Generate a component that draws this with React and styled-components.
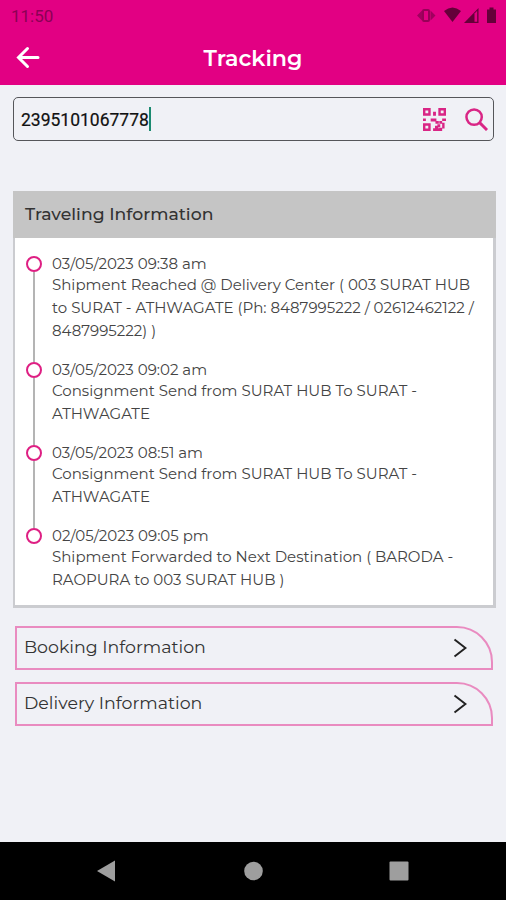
import React from 'react';
import styled, { createGlobalStyle } from 'styled-components';

const GlobalStyle = createGlobalStyle`
    *,
    *::before,
    *::after {
        box-sizing: border-box;
    }

    body {
        margin: 0;
        background-color: #f0f1f6;
        font-family: Montserrat, Inter, sans-serif;
    }
`;

const Screen = styled.div`
    display: flex;
    flex-direction: column;
    width: 506px;
    height: 900px;
    overflow: hidden;
    background-color: #f0f1f6;
`;

const Header = styled.header`
    height: 85px;
    background-color: #e20083;
`;

const StatusBar = styled.div`
    display: flex;
    justify-content: space-between;
    height: 32px;
    padding: 0 7px 0 11px;
    color: #8b0055;
    font-family: Roboto, sans-serif;
    font-size: 17px;
    line-height: 33px;
`;

const StatusIcons = styled.svg`
    width: 84px;
    height: 32px;
`;

const TitleBar = styled.div`
    display: grid;
    grid-template-columns: 60px 1fr 60px;
    align-items: center;
    height: 52px;
    color: #fff;
`;

const BackIcon = styled.svg`
    width: 26px;
    height: 26px;
    margin-left: 15px;
`;

const Title = styled.h1`
    margin: 0;
    font-size: 22.2px;
    font-weight: 600;
    text-align: center;
`;

const Content = styled.main`
    flex: 1;
    padding: 12px 10px 0 13px;
`;

const SearchBox = styled.div`
    display: flex;
    align-items: center;
    width: 481px;
    height: 44px;
    padding: 0 5px 0 7px;
    border: 1px solid #55565a;
    border-radius: 5px;
`;

const SearchValue = styled.span`
    padding-top: 2px;
    color: #111;
    font-family: Roboto, sans-serif;
    font-size: 17.5px;
    -webkit-text-stroke: 0.2px #111;
`;

const Caret = styled.span`
    width: 2px;
    height: 24px;
    background-color: #1b8a70;
`;

const QrIcon = styled.svg`
    width: 23px;
    height: 23px;
    margin-left: auto;
`;

const SearchIcon = styled.svg`
    width: 23px;
    height: 23px;
    margin-left: 19px;
`;

const Card = styled.section`
    height: 417px;
    margin-top: 50px;
    border: solid #cbccd0;
    border-width: 0 3px 3px 2px;
    background-color: #fff;
`;

const CardTitle = styled.h2`
    height: 47px;
    margin: 0 -3px 0 -2px;
    padding-left: 12px;
    background-color: #c5c5c5;
    color: #333;
    font-size: 17.25px;
    font-weight: 500;
    line-height: 45px;
`;

const Timeline = styled.ol`
    margin: 0;
    padding: 17px 0 0 11px;
    list-style: none;
`;

const Event = styled.li`
    display: flex;
    gap: 10px;
`;

const Marker = styled.div`
    display: flex;
    flex-direction: column;
    align-items: center;
    width: 16px;
    padding-top: 1px;

    &::before {
        content: '';
        width: 16px;
        height: 16px;
        border: 2.5px solid #de1f83;
        border-radius: 50%;
    }

    &::after {
        content: '';
        flex: 1;
        width: 2px;
        margin-bottom: -1px;
        background-color: ${(props) => (props.$last ? 'transparent' : '#b4b4b4')};
    }
`;

const EventText = styled.div`
    padding-bottom: 19px;
    color: #444;
    font-size: 15px;
    white-space: nowrap;
`;

const EventDate = styled.div`
    height: 18px;
    line-height: 17px;
`;

const EventLine = styled.div`
    height: 23px;
    line-height: 23px;
`;

const Panels = styled.div`
    display: flex;
    flex-direction: column;
    gap: 12px;
    margin: 18px 0 0 2px;
`;

const Panel = styled.div`
    display: flex;
    align-items: center;
    justify-content: space-between;
    width: 478px;
    height: 44px;
    padding: 0 24px 3px 7px;
    border: 2px solid #e98bc0;
    border-radius: 0 36px 0 0;
    color: #333;
    font-size: 17.4px;
`;

const Chevron = styled.svg`
    width: 14px;
    height: 20px;
    margin-top: 3px;
`;

const NavBar = styled.nav`
    height: 58px;
    background-color: #000;
`;

const events = [
    {
        date: '03/05/2023 09:38 am',
        lines: [
            'Shipment Reached @ Delivery Center ( 003 SURAT HUB',
            'to SURAT - ATHWAGATE (Ph: 8487995222 / 02612462122 /',
            '8487995222) )',
        ],
    },
    {
        date: '03/05/2023 09:02 am',
        lines: ['Consignment Send from SURAT HUB To SURAT -', 'ATHWAGATE'],
    },
    {
        date: '03/05/2023 08:51 am',
        lines: ['Consignment Send from SURAT HUB To SURAT -', 'ATHWAGATE'],
    },
    {
        date: '02/05/2023 09:05 pm',
        lines: ['Shipment Forwarded to Next Destination ( BARODA -', 'RAOPURA to 003 SURAT HUB )'],
    },
];

const panels = ['Booking Information', 'Delivery Information'];

export default function App() {
    return (
        <Screen>
            <GlobalStyle />
            <Header>
                <StatusBar>
                    <span>11:50</span>
                    <StatusIcons viewBox="415 0 84 32">
                        <path d="M417 15.500l5-5v10zM435.500 15.500l-5-5v10z" fill="#a0005f" />
                        <rect x="423" y="10" width="6" height="11" rx="1" fill="#e20083" stroke="#980058" strokeWidth="2" />
                        <path d="M444 11q8.500-7 17 0l-8.500 11z" fill="#650039" />
                        <path d="M464 23l14.500-15v15z" fill="#650039" />
                        <path d="M474.500 13.500l2.700-2.800v11h-2.700z" fill="#e20083" />
                        <path d="M487 9.500h2.500v-2h4v2h2.500v13.500h-9z" fill="#650039" />
                    </StatusIcons>
                </StatusBar>
                <TitleBar>
                    <BackIcon viewBox="0 0 26 26" fill="none" stroke="#fff" strokeWidth="3" strokeLinecap="round">
                        <path d="M23 12.500H4M12.500 3.500L3.500 12.500l9 9" />
                    </BackIcon>
                    <Title>Tracking</Title>
                </TitleBar>
            </Header>
            <Content>
                <SearchBox>
                    <SearchValue>2395101067778</SearchValue>
                    <Caret />
                    <QrIcon viewBox="0 0 24 24" fill="#d92585">
                        <path
                            fillRule="evenodd"
                            d="M0 0h8v8H0zM2.500 2.500v3h3v-3zM16 0h8v8h-8zM18.500 2.500v3h3v-3zM0 16h8v8H0zM2.500 18.500v3h3v-3z"
                        />
                        <path d="M10.500 4h3v4h-3zM0 11h3v2.500H0zM8 11h6v2.500h2.500v3H13V14H8zM20 11h4v2.500h-4zM17 13.500h3v3h-3zM20 15.500h2.500v6H20zM15 17h3v3h-3zM10.500 21h7.500v3h-7.500zM12.500 18.500H16V22h-3.500zM17 20.500h3V24h-3z" />
                    </QrIcon>
                    <SearchIcon viewBox="0 0 24 24" fill="none" stroke="#d92585" strokeWidth="2.600">
                        <circle cx="9.500" cy="9.500" r="8" />
                        <path d="M15 15l8 8" strokeWidth="3" />
                    </SearchIcon>
                </SearchBox>
                <Card>
                    <CardTitle>Traveling Information</CardTitle>
                    <Timeline>
                        {events.map(({ date, lines }, index) => (
                            <Event key={date}>
                                <Marker $last={index === events.length - 1} />
                                <EventText>
                                    <EventDate>{date}</EventDate>
                                    {lines.map((line) => (
                                        <EventLine key={line}>{line}</EventLine>
                                    ))}
                                </EventText>
                            </Event>
                        ))}
                    </Timeline>
                </Card>
                <Panels>
                    {panels.map((name) => (
                        <Panel key={name}>
                            <span>{name}</span>
                            <Chevron viewBox="0 0 14 20" fill="none" stroke="#222" strokeWidth="2">
                                <path d="M1.500 1.500L12.500 10l-11 8.500" />
                            </Chevron>
                        </Panel>
                    ))}
                </Panels>
            </Content>
            <NavBar>
                <svg width="506" height="58" fill="#9e9e9e">
                    <path d="M97 29l18-10.500v21z" />
                    <circle cx="253.500" cy="29" r="9.300" />
                    <rect x="389.500" y="19.500" width="19" height="19" rx="1" />
                </svg>
            </NavBar>
        </Screen>
    );
}
